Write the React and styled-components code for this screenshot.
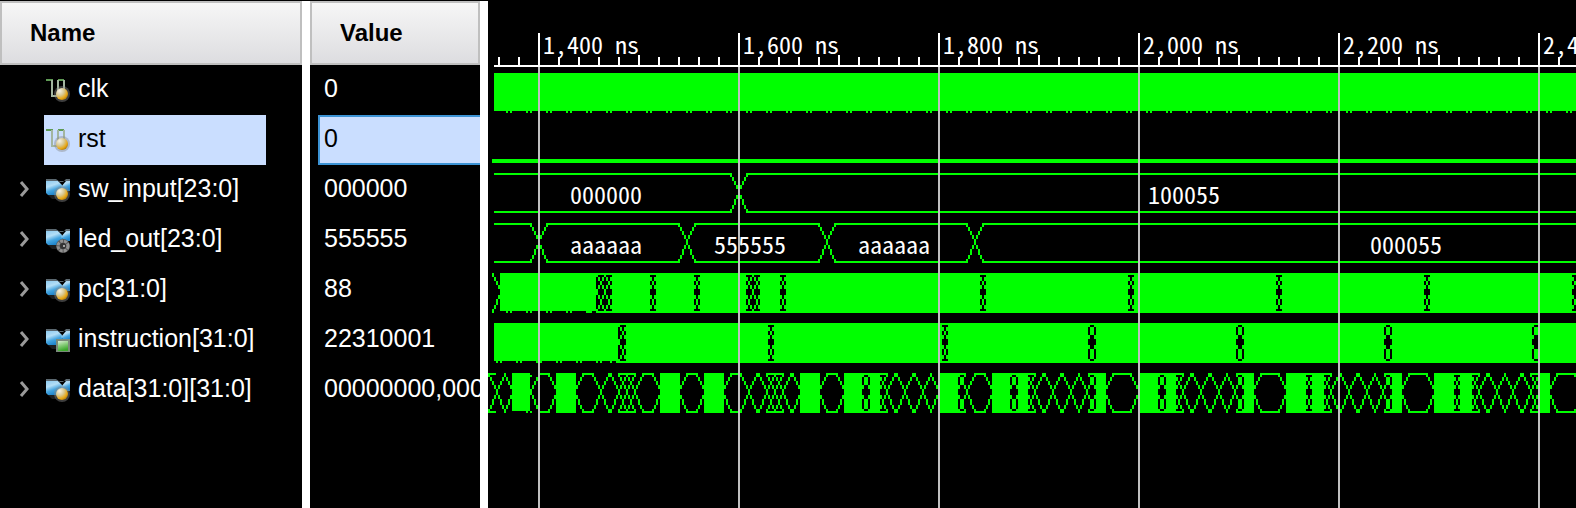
import React from "react";
import styled, { createGlobalStyle } from "styled-components";

const GREEN = "#00ff00";

const GlobalStyle = createGlobalStyle`
  * { box-sizing: border-box; }
  body {
    margin: 0;
    background: #000;
    color: #fff;
    font-family: "Liberation Sans", Arial, sans-serif;
  }
`;

const Viewer = styled.main`
  display: grid;
  grid-template-columns: 302px 8px 170px 8px minmax(0, 1fr);
  min-height: 100vh;
  padding-top: 1px;
  background: #000;
  overflow: hidden;
`;

const Column = styled.section`
  min-width: 0;
  overflow: hidden;
`;

const Splitter = styled.div`
  background: #fff;
`;

const ColumnHeader = styled.h2`
  display: flex;
  align-items: center;
  height: 64px;
  margin: 0;
  padding-left: 28px;
  border: 2px solid #bfbfbf;
  background: linear-gradient(#f6f6f6, #dddde0);
  color: #000;
  font-size: 24px;
  line-height: 28px;
  font-weight: 700;
`;

const List = styled.ul`
  margin: 0;
  padding: 0;
  list-style: none;
`;

const NameRow = styled.li`
  display: flex;
  height: 50px;
  padding-right: 36px;
`;

const ExpandSlot = styled.div`
  display: flex;
  flex: 0 0 44px;
  padding: 14px 0 0 18px;
`;

const ExpandButton = styled.button`
  display: block;
  width: 12px;
  height: 20px;
  padding: 0;
  border: 0;
  background: none;
  cursor: pointer;
`;

const SignalName = styled.div`
  display: flex;
  flex: 1;
  gap: 8px;
  padding-left: 2px;
  background: ${(p) => (p.$selected ? "#cadeff" : "transparent")};
  color: ${(p) => (p.$selected ? "#000" : "#fff")};
  font-size: 25px;
  line-height: 46px;
  white-space: nowrap;

  svg {
    flex: none;
    margin-top: 14px;
  }
`;

const ValueRow = styled.li`
  height: 50px;
  margin-left: 8px;
  padding-left: 4px;
  border: 2px solid ${(p) => (p.$selected ? "#3c93d4" : "transparent")};
  border-right: 0;
  background: ${(p) => (p.$selected ? "#cadeff" : "transparent")};
  color: ${(p) => (p.$selected ? "#000" : "#fff")};
  font-size: 25px;
  line-height: 42px;
  white-space: nowrap;
`;

const WavePane = styled.section`
  position: relative;
  min-width: 0;
  overflow: hidden;
`;

const waveText = `
  text {
    fill: #fff;
    font-family: "Noto Sans CJK SC", "Liberation Mono", monospace;
    font-feature-settings: "hwid";
    font-size: 24px;
  }
`;

const Ruler = styled.svg`
  display: block;
  width: 100%;
  height: 64px;
  overflow: visible;
  ${waveText}
`;

const Lane = styled.svg`
  display: block;
  width: 100%;
  height: 50px;
  ${waveText}
`;

const GridLines = styled.svg`
  position: absolute;
  top: 66px;
  left: 0;
  width: 100%;
  height: calc(100% - 66px);
  pointer-events: none;
`;

/* ---------- icons ---------- */

const HiddenDefs = styled.svg`
  position: absolute;
`;

const IconDefs = () => (
  <HiddenDefs width="0" height="0" aria-hidden="true">
    <defs>
      <linearGradient id="panel" x1="0" y1="0" x2="0.4" y2="1">
        <stop offset="0" stopColor="#8ccbf0" />
        <stop offset="0.4" stopColor="#b4def6" />
        <stop offset="0.7" stopColor="#45a5e0" />
        <stop offset="1" stopColor="#1f86cc" />
      </linearGradient>
      <radialGradient id="ball" cx="0.3" cy="0.25" r="0.85">
        <stop offset="0" stopColor="#f6f2e6" />
        <stop offset="0.45" stopColor="#d8c78e" />
        <stop offset="0.75" stopColor="#e8a818" />
        <stop offset="1" stopColor="#a87408" />
      </radialGradient>
      <linearGradient id="chip" x1="0" y1="0" x2="0.3" y2="1">
        <stop offset="0" stopColor="#d8ecd4" />
        <stop offset="0.5" stopColor="#86cc78" />
        <stop offset="1" stopColor="#3ca82c" />
      </linearGradient>
    </defs>
  </HiddenDefs>
);

const Ball = () => (
  <>
    <circle cx="16" cy="15" r="8" fill="#8a8a8a" opacity="0.45" />
    <circle cx="16" cy="15" r="6" fill="url(#ball)" />
  </>
);

const Gear = () => (
  <>
    <circle cx="17" cy="17" r="7" fill="#555" />
    <circle cx="17" cy="17" r="5" fill="none" stroke="#909090" strokeWidth="3" strokeDasharray="3 1" />
    <circle cx="17" cy="17" r="3" fill="#333" />
    <circle cx="18" cy="17" r="1" fill="#ccc" />
  </>
);

const Chip = () => (
  <>
    <rect x="10" y="10" width="14" height="13" fill="#7a8a7a" />
    <rect x="12" y="12" width="10" height="10" fill="url(#chip)" />
  </>
);

const WireIcon = () => (
  <svg width="24" height="24" viewBox="0 0 24 24" aria-hidden="true">
    <path d="M0 1H7M12 1H18" fill="none" stroke="#5f9a55" strokeWidth="2" />
    <path d="M6 1V17H11M12 17V1M18 1V10" fill="none" stroke="#a3b5a0" strokeWidth="2" />
    <Ball />
  </svg>
);

const badges = { ball: Ball, gear: Gear, chip: Chip };

const BusIcon = ({ badge }) => {
  const Badge = badges[badge];
  return (
    <svg width="24" height="24" viewBox="0 0 24 24" aria-hidden="true">
      <path d="M0 0H10L14 3H17L20 0H24V2H0Z" fill="#5b6870" />
      <path d="M0 2H12L16 6V12L12 16H2L0 14Z" fill="url(#panel)" />
      <path d="M24 2H20L15 8L18 12H24Z" fill="url(#panel)" />
      <path d="M2 16H10V20H6Z" fill="#1c1e20" />
      <Badge />
    </svg>
  );
};

const Chevron = () => (
  <svg width="12" height="20" viewBox="0 0 12 20" aria-hidden="true">
    <path d="M3 3L9 10L3 17" fill="none" stroke="#9a9a9a" strokeWidth="3" />
  </svg>
);

/* ---------- waveform drawing (unit cell = 2px) ---------- */

const TOP = 4;
const BOTTOM = 23;
const END = 1200;

// Rows covered by a crossing, by distance from its centre column.
const CROSS = [
  [12, 13, 14],
  [10, 11, 15, 16],
  [8, 9, 17, 18, 19],
  [6, 7, 20, 21],
  [4, 5, 22, 23],
];

const box = (x, y, w, h) => `M${x} ${y}h${w}v${h}h${-w}z`;

const crossing = (c, sides = [-1, 1]) =>
  sides
    .map((s) => CROSS.map((rows, i) => rows.map((r) => box(c + s * i, r, 1, 1)).join("")).join(""))
    .join("");

const rails = (a, b) => {
  const x = Math.min(a, b);
  const w = Math.abs(b - a) + 1;
  return box(x, TOP, w, 1) + box(x, BOTTOM, w, 1);
};

// edges: [column, busy]; a busy stretch is painted solid up to the next edge.
const busPath = (edges) =>
  edges
    .map(([c, busy], i) => {
      const next = edges[i + 1] ? edges[i + 1][0] : END;
      const body = busy ? box(c, TOP, next - c + 1, 20) : rails(c + 4, edges[i + 1] ? next - 4 : next);
      return crossing(c) + body;
    })
    .join("");

// A dense toggle: solid block whose lower rail shows only short double dots.
const densePath = (from, to, firstDot) => {
  let d = box(from, TOP, to - from, 19);
  for (let x = firstDot; x < to; x += 10) d += box(x, BOTTOM, 1, 1) + box(x + 2, BOTTOM, 1, 1);
  return d;
};

const S = true;

const swPath = rails(3, 121) + busPath([[125]]);
const ledPath = rails(3, 21) + busPath([[25], [99], [169], [243]]);

const pcPath =
  crossing(6, [-1]) +
  densePath(6, 54, 9) +
  rails(54, 62) +
  busPath([
    [54], [58], [62, S], [80], [84, S], [102], [106, S], [128], [132], [136, S],
    [145], [149, S], [245], [249, S], [319], [323, S], [393], [397, S],
    [467], [471, S], [541], [545, S],
  ]);

const instructionPath =
  densePath(3, 64, 4) +
  box(64, TOP, 1, 20) +
  busPath([
    [65], [69, S], [139], [143, S], [226], [230, S], [299], [304, S],
    [373], [378, S], [447], [452, S], [521], [526, S],
  ]);

const dataPath =
  rails(0, 3) +
  crossing(4) +
  crossing(12, [-1]) +
  box(12, TOP, 9, 19) +
  box(19, BOTTOM, 1, 1) +
  box(21, BOTTOM, 1, 1) +
  box(21, 5, 1, 1) +
  crossing(21, [1]) +
  rails(25, 30) +
  busPath([
    [34, S], [43], [56], [65], [69], [73], [86, S], [95], [108, S], [117],
    [130], [139], [143], [147], [156, S], [165], [178, S], [186], [191, S],
    [195], [199], [208], [217], [225, S], [234], [239], [252, S], [260],
    [265, S], [269], [273], [282], [291], [299], [304, S], [308], [325, S],
    [334], [339, S], [343], [347], [356], [365], [373], [378, S], [382],
    [399, S], [408], [412, S], [417], [421], [430], [439], [447], [452, S],
    [456], [473, S], [482], [486, S], [491], [495], [504], [512], [521],
    [525, S], [530], [547, S],
  ]);

const signals = [
  { name: "clk", value: "0", path: densePath(3, END, 9) },
  { name: "rst", value: "0", selected: true, path: box(2, 22, END, 2) },
  {
    name: "sw_input[23:0]", value: "000000", badge: "ball", path: swPath,
    labels: [[82, "000000"], [660, "100055"]],
  },
  {
    name: "led_out[23:0]", value: "555555", badge: "gear", path: ledPath,
    labels: [[82, "aaaaaa"], [226, "555555"], [370, "aaaaaa"], [882, "000055"]],
  },
  { name: "pc[31:0]", value: "88", badge: "ball", path: pcPath },
  { name: "instruction[31:0]", value: "22310001", badge: "chip", path: instructionPath },
  { name: "data[31:0][31:0]", value: "00000000,000", badge: "ball", path: dataPath },
];

const majors = Array.from({ length: 6 }, (_, i) => ({
  x: 50 + i * 200,
  label: `${(1400 + i * 200).toLocaleString("en-US")} ns`,
}));

const minors = Array.from({ length: 62 }, (_, i) => i - 2).filter((i) => i % 10 !== 0);

export default function App() {
  return (
    <>
      <GlobalStyle />
      <IconDefs />
      <Viewer>
        <Column aria-label="Signal names">
          <ColumnHeader>Name</ColumnHeader>
          <List>
            {signals.map((s) => (
              <NameRow key={s.name}>
                <ExpandSlot>
                  {s.badge && (
                    <ExpandButton type="button" aria-label={`Expand ${s.name}`}>
                      <Chevron />
                    </ExpandButton>
                  )}
                </ExpandSlot>
                <SignalName $selected={s.selected}>
                  {s.badge ? <BusIcon badge={s.badge} /> : <WireIcon />}
                  <span>{s.name}</span>
                </SignalName>
              </NameRow>
            ))}
          </List>
        </Column>
        <Splitter />
        <Column aria-label="Signal values">
          <ColumnHeader>Value</ColumnHeader>
          <List>
            {signals.map((s) => (
              <ValueRow key={s.name} $selected={s.selected}>
                {s.value}
              </ValueRow>
            ))}
          </List>
        </Column>
        <Splitter />
        <WavePane aria-label="Waveforms">
          <Ruler shapeRendering="crispEdges">
            <rect x="6" y="64" width="100%" height="2" fill="#fff" />
            {minors.map((i) => (
              <rect
                key={i}
                x={50 + i * 20}
                y={i % 5 === 0 ? 54 : 56}
                width="2"
                height={i % 5 === 0 ? 10 : 8}
                fill="#fff"
              />
            ))}
            {majors.map((m) => (
              <g key={m.x}>
                <rect x={m.x} y="32" width="2" height="32" fill="#fff" />
                <text x={m.x + 5} y="53">{m.label}</text>
              </g>
            ))}
          </Ruler>
          {signals.map((s) => (
            <Lane key={s.name} shapeRendering="crispEdges">
              <path d={s.path} transform="scale(2)" fill={GREEN} />
              {(s.labels || []).map(([x, text]) => (
                <text key={x} x={x} y="39">{text}</text>
              ))}
            </Lane>
          ))}
          <GridLines shapeRendering="crispEdges" aria-hidden="true">
            {majors.map((m) => (
              <rect key={m.x} x={m.x} y="0" width="2" height="100%" fill="#c0c0c0" />
            ))}
          </GridLines>
        </WavePane>
      </Viewer>
    </>
  );
}
